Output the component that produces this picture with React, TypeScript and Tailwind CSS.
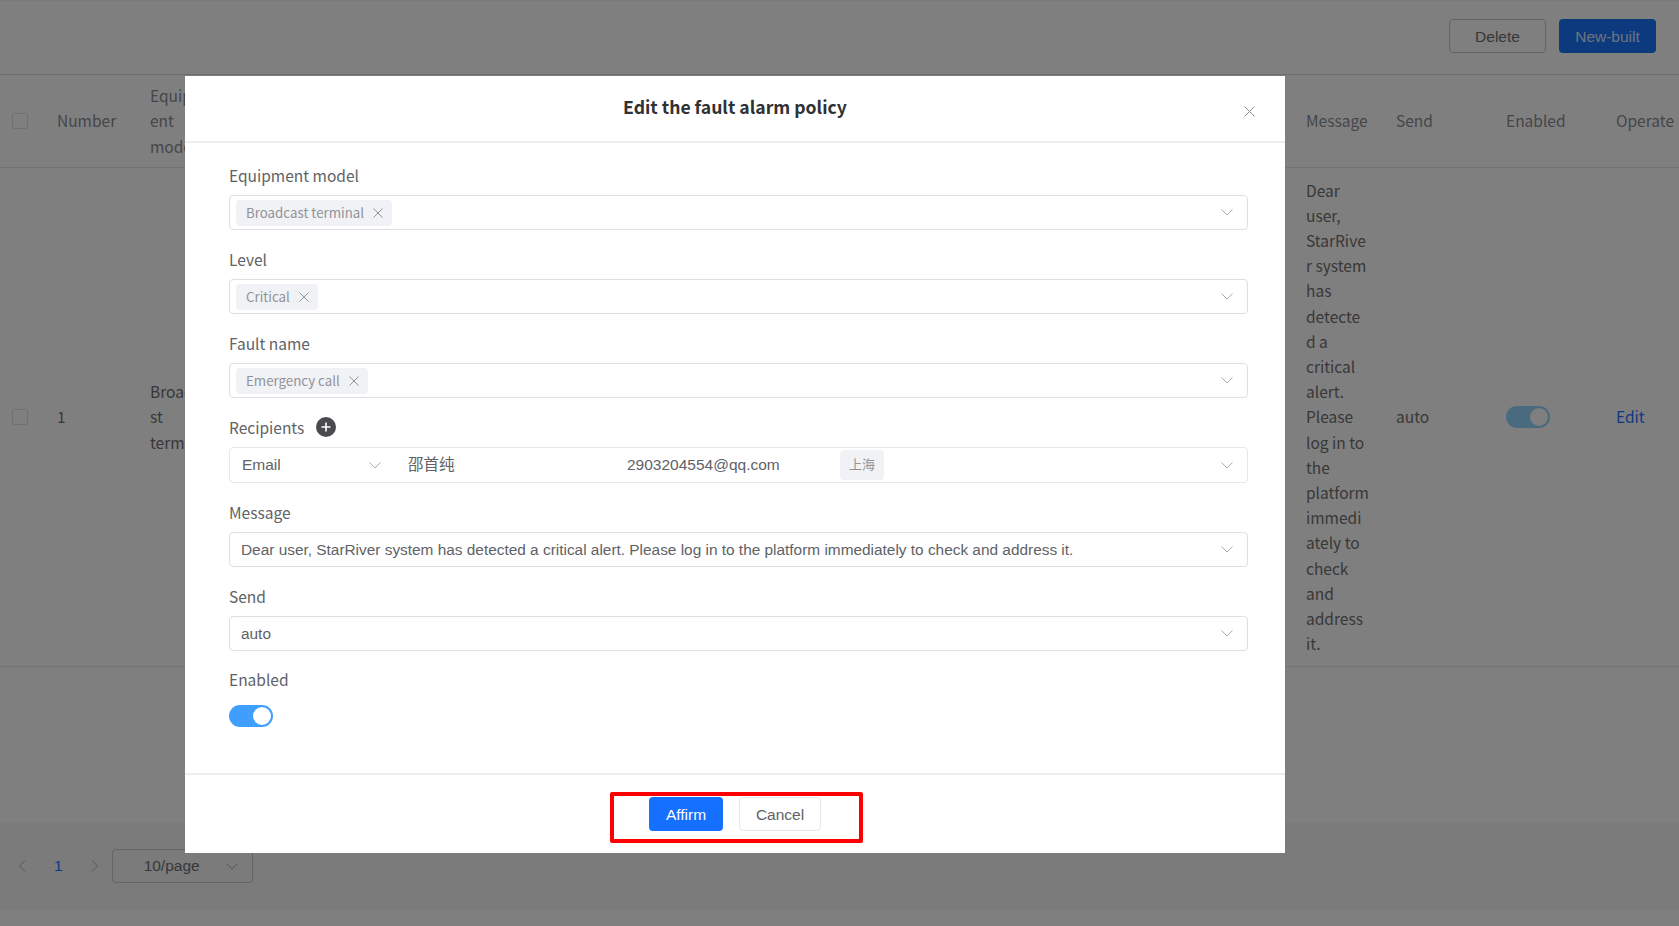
import type { ReactNode } from 'react'

const arial = "font-['Liberation_Sans','Noto_Sans_CJK_SC',sans-serif]"

const messageText =
  'Dear user, StarRiver system has detected a critical alert. Please log in to the platform immediately to check and address it.'

function Chevron({ className = 'text-[#a8abb2]' }: { className?: string }) {
  return (
    <svg width="12" height="7" viewBox="0 0 12 7" fill="none" className={`shrink-0 ${className}`}>
      <path d="M0.5 0.5 6 6 11.5 0.5" stroke="currentColor" strokeWidth="1" />
    </svg>
  )
}

function SideArrow({ flip = false }: { flip?: boolean }) {
  return (
    <svg width="7" height="12" viewBox="0 0 7 12" fill="none" className={flip ? 'rotate-180' : ''}>
      <path d="M6 0.5 0.5 6 6 11.5" stroke="#a8abb2" strokeWidth="1" />
    </svg>
  )
}

function Cross({ size = 10, color = '#909399' }: { size?: number; color?: string }) {
  return (
    <svg width={size} height={size} viewBox="0 0 10 10" fill="none" className="shrink-0">
      <path d="M0.5 0.5 9.5 9.5M9.5 0.5 0.5 9.5" stroke={color} strokeWidth={10 / size} />
    </svg>
  )
}

function Checkbox() {
  return <span className="block size-4 rounded-[2px] border border-[#dcdfe6] bg-white" />
}

function Toggle({ track }: { track: string }) {
  return (
    <span className={`flex h-[22px] w-11 items-center justify-end rounded-full pr-[2px] ${track}`}>
      <span className="size-[18px] rounded-full bg-white" />
    </span>
  )
}

function Tag({ label }: { label: string }) {
  return (
    <span className="flex h-[26px] items-center gap-[9px] rounded-[4px] bg-[#f0f2f5] pl-[10px] pr-[9px] text-[13.3px] text-[#909399]">
      {label}
      <Cross />
    </span>
  )
}

function Field({ label, extra, children }: { label: string; extra?: ReactNode; children: ReactNode }) {
  return (
    <div className="mb-[17px]">
      <div className="mb-2 flex h-6 items-center gap-3 text-[15.5px] leading-6 text-[#606266]">
        {label}
        {extra}
      </div>
      {children}
    </div>
  )
}

function SelectBox({ children }: { children: ReactNode }) {
  return (
    <div className="flex h-[35px] items-center justify-between rounded-[4px] border border-[#dcdfe6] pl-[6px] pr-[14px]">
      {children}
      <Chevron />
    </div>
  )
}

// Columns shared by the header and the row of the table behind the dialog
function TableRow({ number, model, message, send, enabled, operate, className }: {
  number: ReactNode
  model: ReactNode
  message: ReactNode
  send: ReactNode
  enabled: ReactNode
  operate: ReactNode
  className: string
}) {
  return (
    <div className={`flex items-center border-b border-[#e4e7ed] pl-3 ${className}`}>
      <div className="w-[45px]"><Checkbox /></div>
      <div className="w-[93px]">{number}</div>
      <div className="w-[63px] break-words">{model}</div>
      <div className="flex-1" />
      <div className="w-[90px] pr-[27px] break-words">{message}</div>
      <div className="w-[110px]">{send}</div>
      <div className="w-[110px]">{enabled}</div>
      <div className="w-[63px]">{operate}</div>
    </div>
  )
}

export default function App() {
  return (
    <div className="relative h-[926px] w-[1679px] overflow-hidden bg-white font-['Noto_Sans_CJK_SC',sans-serif]">
      <div className="flex h-full flex-col border-t border-[#f4f4f4]">
        {/* Toolbar */}
        <div className={`flex h-[74px] items-start justify-end gap-[13px] border-b border-[#d8d8d8] pr-[23px] pt-[18px] text-[15.5px] ${arial}`}>
          <button className="h-[34px] w-[97px] rounded-[4px] border border-[#c8c8c8] pt-px text-[#6e6e6e]">Delete</button>
          <button className="h-[34px] w-[97px] rounded-[4px] bg-[#1a74ff] pt-px text-[#d8e6ff]">New-built</button>
        </div>

        {/* Table */}
        <div className="text-[15.5px] leading-[25.2px] text-[#707070]">
          <TableRow
            className="h-[93px] text-[#8a8d93]"
            number="Number"
            model="Equipment model"
            message="Message"
            send="Send"
            enabled="Enabled"
            operate="Operate"
          />
          <TableRow
            className="h-[499px]"
            number="1"
            model="Broadcast terminal"
            message={messageText}
            send="auto"
            enabled={<Toggle track="bg-[#95d5ff]" />}
            operate={<span className="text-[#1a74ff]">Edit</span>}
          />
        </div>

        <div className="flex-1" />

        {/* Pagination */}
        <div className={`mb-4 flex h-[88px] items-center bg-[#f6f6f6] pl-[19px] ${arial}`}>
          <SideArrow />
          <span className="ml-[28px] text-[15.5px] text-[#1a74ff]">1</span>
          <span className="ml-[28px]"><SideArrow flip /></span>
          <div className="ml-[14px] flex h-[34px] w-[141px] items-center rounded-[4px] border border-[#c8c8c8] pl-[31px] pr-[14px] text-[15.5px] text-[#707070]">
            <span className="flex-1">10/page</span>
            <Chevron />
          </div>
        </div>
      </div>

      {/* Dialog overlay */}
      <div className="absolute inset-0 bg-black/50">
        <div className="absolute left-[185px] top-[76px] flex h-[777px] w-[1100px] flex-col bg-white">
          <div className="relative flex h-[67px] shrink-0 items-center justify-center border-b-2 border-[#eceef2] pb-[2px] text-[17.6px] font-semibold text-[#303133]">
            Edit the fault alarm policy
            <span className="absolute left-[1059px] top-[30px]">
              <Cross size={11} color="#8a8d93" />
            </span>
          </div>

          <div className="flex-1 pl-[44px] pr-[37px] pt-5">
            <Field label="Equipment model">
              <SelectBox><Tag label="Broadcast terminal" /></SelectBox>
            </Field>
            <Field label="Level">
              <SelectBox><Tag label="Critical" /></SelectBox>
            </Field>
            <Field label="Fault name">
              <SelectBox><Tag label="Emergency call" /></SelectBox>
            </Field>
            <Field
              label="Recipients"
              extra={
                <span className="flex size-5 items-center justify-center rounded-full bg-[#4a4a4f]">
                  <svg width="10" height="10" viewBox="0 0 10 10" fill="none">
                    <path d="M5 0.5V9.5M0.5 5H9.5" stroke="#fff" strokeWidth="1.6" />
                  </svg>
                </span>
              }
            >
              <div className={`flex h-[36px] items-center rounded-[4px] border border-[#e4e7ed] pr-[14px] text-[15.5px] text-[#606266] ${arial}`}>
                <span className="w-[139px] pl-3">Email</span>
                <Chevron />
                <span className="ml-[27px] w-[219px]">邵首纯</span>
                <span className="w-[213px]">2903204554@qq.com</span>
                <span className="flex h-[30px] w-11 items-center justify-center rounded-[4px] bg-[#f0f2f5] text-[13px] text-[#909399]">上海</span>
                <span className="flex-1" />
                <Chevron />
              </div>
            </Field>
            <Field label="Message">
              <SelectBox>
                <span className={`pl-[5px] text-[15.4px] text-[#606266] ${arial}`}>{messageText}</span>
              </SelectBox>
            </Field>
            <Field label="Send">
              <SelectBox>
                <span className={`pl-[5px] text-[15.4px] text-[#606266] ${arial}`}>auto</span>
              </SelectBox>
            </Field>
            <div className="flex h-6 items-center text-[15.5px] text-[#606266]">Enabled</div>
            <div className="mt-[13px]"><Toggle track="bg-[#409eff]" /></div>
          </div>

          <div className={`relative flex h-[80px] shrink-0 justify-center gap-4 border-t-2 border-[#eceef2] pt-[22px] text-[15.5px] ${arial}`}>
            <button className="h-[34px] w-[74px] rounded-[4px] bg-[#1570ff] pt-px text-white">Affirm</button>
            <button className="h-[34px] w-[82px] rounded-[4px] border border-[#e4e7ed] pt-px text-[#606266]">Cancel</button>
            {/* Red annotation frame drawn over the buttons */}
            <span className="absolute left-[425px] top-[17px] h-[51px] w-[253px] rounded-[2px] border-4 border-[#ff0000]" />
          </div>
        </div>
      </div>
    </div>
  )
}
